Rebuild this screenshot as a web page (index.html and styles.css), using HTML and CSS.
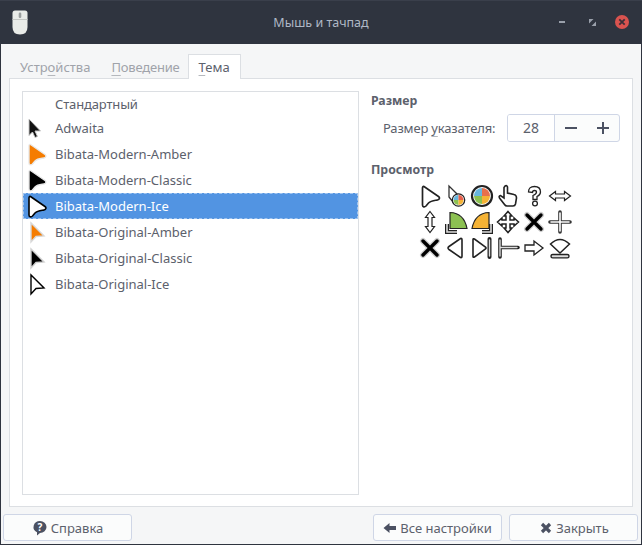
FILE: index.html
```html
<!DOCTYPE html>
<html lang="ru">
<head>
<meta charset="utf-8">
<title>Мышь и тачпад</title>
<link rel="stylesheet" href="styles.css">
</head>
<body>
<svg class="defs" width="0" height="0" aria-hidden="true">
  <defs>
    <path id="modern" d="M3 1.5 C2 1 1.5 2 1.5 3 L1.5 20 C1.5 22 3.5 22.5 5 21 L7.5 18 C10 15.5 14 15.5 16.5 15 C18.8 14.5 19 12.5 17.5 11.5 Z"/>
    <path id="orig" d="M2 1 L2 20 L7 14.5 L15 14 Z"/>
  </defs>
</svg>
<div class="window">
  <header class="titlebar">
    <svg class="app-icon" width="16" height="25" viewBox="0 0 16 25">
      <path d="M3 0.5 H13 Q15.5 0.5 15.5 3 V17 Q15.5 24.5 8 24.5 Q0.5 24.5 0.5 17 V3 Q0.5 0.5 3 0.5 Z" fill="#e9ebe8"/>
      <path d="M0.5 9.5 H15.5" stroke="#c4c7c4" stroke-width="1"/>
      <rect x="6.7" y="2.5" width="2.6" height="5.5" rx="1.2" fill="#9a9e9e"/>
    </svg>
    <div class="title">Мышь и тачпад</div>
    <div class="wm">
      <span class="wm-min"></span>
      <svg class="wm-max" width="7" height="7" viewBox="0 0 7 7"><path d="M0 0 H4.5 L0 4.5 Z M7 7 H2.5 L7 2.5 Z" fill="#9aa0ab"/></svg>
      <svg class="wm-close" width="16" height="16" viewBox="0 0 16 16"><circle cx="8" cy="8" r="7" fill="#d9534f"/><path d="M5.3 5.3 L10.7 10.7 M10.7 5.3 L5.3 10.7" stroke="#3a2f38" stroke-width="1.8"/></svg>
    </div>
  </header>

  <main class="content">
    <nav class="tabs">
      <span class="tab">Устр<u>о</u>йства</span>
      <span class="tab"><u>П</u>оведение</span>
      <span class="tab active"><u>Т</u>ема</span>
    </nav>
    <section class="pane">
      <div class="list">
        <div class="row first"><span class="row-icon"></span>Стандартный</div>
        <div class="row short">
          <span class="row-icon"><svg width="24" height="24" viewBox="0 0 24 24"><path d="M4 3 V19.5 L7.5 16 L10 21.5 L12.5 20.5 L10 15 H15.5 Z" fill="#111" stroke="#c8c8c8" stroke-width="1"/></svg></span>Adwaita
        </div>
        <div class="row">
          <span class="row-icon"><svg width="24" height="24" viewBox="0 0 24 24"><use href="#modern" transform="translate(2.5 1)" fill="#f57c00" stroke="#e8e8e8" stroke-width="1.4"/></svg></span>Bibata-Modern-Amber
        </div>
        <div class="row">
          <span class="row-icon"><svg width="24" height="24" viewBox="0 0 24 24"><use href="#modern" transform="translate(2.5 1)" fill="#000" stroke="#e8e8e8" stroke-width="1.4"/></svg></span>Bibata-Modern-Classic
        </div>
        <div class="row selected">
          <span class="row-icon"><svg width="24" height="24" viewBox="0 0 24 24"><use href="#modern" transform="translate(2.5 1)" fill="#fff" stroke="#000" stroke-width="1.6"/></svg></span>Bibata-Modern-Ice
        </div>
        <div class="row">
          <span class="row-icon"><svg width="24" height="24" viewBox="0 0 24 24"><use href="#orig" transform="translate(4 2)" fill="#f57c00" stroke="#d8d8d8" stroke-width="1.4"/></svg></span>Bibata-Original-Amber
        </div>
        <div class="row">
          <span class="row-icon"><svg width="24" height="24" viewBox="0 0 24 24"><use href="#orig" transform="translate(4 2)" fill="#000" stroke="#d0d0d0" stroke-width="1.4"/></svg></span>Bibata-Original-Classic
        </div>
        <div class="row">
          <span class="row-icon"><svg width="24" height="24" viewBox="0 0 24 24"><use href="#orig" transform="translate(4 2)" fill="#fff" stroke="#000" stroke-width="1.4"/></svg></span>Bibata-Original-Ice
        </div>
      </div>

      <aside class="side">
        <h2 class="heading">Размер</h2>
        <div class="size-row">
          <label class="size-label">Размер <u>у</u>казателя:</label>
          <div class="spin">
            <span class="spin-value">28</span>
            <span class="spin-btn"><svg width="12" height="12" viewBox="0 0 12 12"><path d="M0 6 H12" stroke="#4b5162" stroke-width="2"/></svg></span>
            <span class="spin-btn"><svg width="12" height="12" viewBox="0 0 12 12"><path d="M0 6 H12 M6 0 V12" stroke="#4b5162" stroke-width="2"/></svg></span>
          </div>
        </div>
        <h2 class="heading preview-heading">Просмотр</h2>
        <div class="preview">
          <svg width="24" height="24" viewBox="0 0 24 24"><use href="#modern" transform="translate(3 1)" fill="#fff" stroke="#222" stroke-width="1.7"/></svg>
          <svg width="24" height="24" viewBox="0 0 24 24"><path d="M5 2 L5 13 L9 18 L13 10 Z" fill="#fff" stroke="#333" stroke-width="1.3"/><circle cx="14.5" cy="16" r="6.2" fill="#fff" stroke="#222" stroke-width="1.3"/><path d="M14.5 16 V11 A5 5 0 0 0 9.5 16 Z" fill="#67b6de"/><path d="M14.5 16 H9.5 A5 5 0 0 0 14.5 21 Z" fill="#8cc152"/><path d="M14.5 16 V21 A5 5 0 0 0 19.5 16 Z" fill="#f5b335"/><path d="M14.5 16 H19.5 A5 5 0 0 0 14.5 11 Z" fill="#e8604c"/></svg>
          <svg width="24" height="24" viewBox="0 0 24 24"><circle cx="12" cy="12" r="10" fill="#fff" stroke="#222" stroke-width="2.2"/><path d="M12 12 V4 A8 8 0 0 0 4 12 Z" fill="#67b6de"/><path d="M12 12 H4 A8 8 0 0 0 12 20 Z" fill="#8cc152"/><path d="M12 12 V20 A8 8 0 0 0 20 12 Z" fill="#f5b335"/><path d="M12 12 H20 A8 8 0 0 0 12 4 Z" fill="#e8704c"/></svg>
          <svg width="24" height="24" viewBox="0 0 24 24"><path d="M9 2 Q11 1 11.5 3 L11.5 9 L18 10.5 Q20.5 11 20.5 14 L19.5 20 Q19 22 17 22 L11 22 Q9.5 22 8.5 20.5 L3.5 14 Q2.5 12 4.5 11.5 L8 14 L8 3.5 Z" fill="#fff" stroke="#222" stroke-width="1.6"/></svg>
          <svg width="24" height="24" viewBox="0 0 24 24"><path d="M6.5 8 Q6.5 2.5 12.5 2.5 Q18.5 2.5 18.5 8 Q18.5 11 15 12.5 L15 15.5 L11 15.5 L11 11.5 Q14.5 10 14.5 8 Q14.5 6.5 12.5 6.5 Q10.5 6.5 10.5 8.5 Z" fill="#fff" stroke="#222" stroke-width="1.3"/><circle cx="13" cy="19.5" r="2.4" fill="#fff" stroke="#222" stroke-width="1.3"/></svg>
          <svg width="24" height="24" viewBox="0 0 24 24"><path d="M1.5 12 L7.5 7.5 V10 H16.5 V7.5 L22.5 12 L16.5 16.5 V14 H7.5 V16.5 Z" fill="#fff" stroke="#222" stroke-width="1.2"/></svg>

          <svg width="24" height="24" viewBox="0 0 24 24"><path d="M12 1.5 L16.5 7.5 H14 V16.5 H16.5 L12 22.5 L7.5 16.5 H10 V7.5 H7.5 Z" fill="#fff" stroke="#222" stroke-width="1.2"/></svg>
          <svg width="24" height="24" viewBox="0 0 24 24"><path d="M6 2.5 Q20 3 23 18.5 L6 18.5 Z" fill="#8cc152" stroke="#222" stroke-width="1.2"/><path d="M3 14 V22 H13" fill="none" stroke="#222" stroke-width="4"/><path d="M3 14 V22 H13" fill="none" stroke="#ddd" stroke-width="1.6"/></svg>
          <svg width="24" height="24" viewBox="0 0 24 24"><path d="M19 2.5 Q5 3 2 18.5 L19 18.5 Z" fill="#f5b335" stroke="#222" stroke-width="1.2"/><path d="M21 14 V22 H12" fill="none" stroke="#222" stroke-width="4"/><path d="M21 14 V22 H12" fill="none" stroke="#ddd" stroke-width="1.6"/></svg>
          <svg width="24" height="24" viewBox="0 0 24 24"><path d="M12 1.5 L16 6 H14 V10 H18 V8 L22.5 12 L18 16 V14 H14 V18 H16 L12 22.5 L8 18 H10 V14 H6 V16 L1.5 12 L6 8 V10 H10 V6 H8 Z" fill="#fff" stroke="#222" stroke-width="1.5"/></svg>
          <svg width="24" height="24" viewBox="0 0 24 24"><path d="M5 5 L19 19 M19 5 L5 19" stroke="#ccc" stroke-width="6" stroke-linecap="round"/><path d="M5 5 L19 19 M19 5 L5 19" stroke="#000" stroke-width="3.4" stroke-linecap="round"/></svg>
          <svg width="24" height="24" viewBox="0 0 24 24"><path d="M12 2 V22 M2 12 H22" stroke="#333" stroke-width="3.6" stroke-linecap="round"/><path d="M12 3 V21 M3 12 H21" stroke="#fff" stroke-width="1.6" stroke-linecap="round"/></svg>

          <svg width="24" height="24" viewBox="0 0 24 24"><path d="M5 5 L19 19 M19 5 L5 19" stroke="#ccc" stroke-width="6" stroke-linecap="round"/><path d="M5 5 L19 19 M19 5 L5 19" stroke="#000" stroke-width="3.4" stroke-linecap="round"/></svg>
          <svg width="24" height="24" viewBox="0 0 24 24"><path d="M16.5 2.5 Q18 2 18 4 V20 Q18 22 16.5 21.5 L5 13.5 Q3 12 5 10.5 Z" fill="#fff" stroke="#222" stroke-width="1.6"/></svg>
          <svg width="24" height="24" viewBox="0 0 24 24"><path d="M3 3.5 Q3 2.5 4.5 3 L15.5 11 Q16.5 12 15.5 13 L4.5 21 Q3 21.5 3 20.5 Z" fill="#fff" stroke="#222" stroke-width="1.6"/><path d="M19.5 3 V21" stroke="#222" stroke-width="4" stroke-linecap="round"/><path d="M19.5 4 V20" stroke="#ddd" stroke-width="1.4" stroke-linecap="round"/></svg>
          <svg width="24" height="24" viewBox="0 0 24 24"><path d="M4 3 V21 M4 11.5 H22" stroke="#222" stroke-width="3.6" stroke-linecap="round"/><path d="M4 4 V20 M4 11.5 H21" stroke="#ddd" stroke-width="1.4" stroke-linecap="round"/></svg>
          <svg width="24" height="24" viewBox="0 0 24 24"><path d="M3 9 H12 V5 L21 12 L12 19 V15 H3 Z" fill="#fff" stroke="#222" stroke-width="1.3"/></svg>
          <svg width="24" height="24" viewBox="0 0 24 24"><path d="M2.5 8 Q12 -1 21.5 8 L12 17 Z" fill="#fff" stroke="#222" stroke-width="1.5"/><rect x="3" y="18.5" width="18" height="3.4" rx="1.7" fill="#ddd" stroke="#222" stroke-width="1.4"/></svg>
        </div>
      </aside>
    </section>

    <footer class="actions">
      <button class="btn btn-help" type="button"><svg width="16" height="16" viewBox="0 0 16 16"><path d="M8 1 A6.5 6 0 0 1 8 13 L5 15.5 L5 12.3 A6.5 6 0 0 1 8 1 Z" fill="#4b5162"/><text x="8" y="10.5" class="q">?</text></svg>Справка</button>
      <div class="actions-right">
        <button class="btn" type="button"><svg width="14" height="12" viewBox="0 0 14 12"><path d="M0.5 6 L6.5 1 V4 H13 V8 H6.5 V11 Z" fill="#4b5162"/></svg>Все настройки</button>
        <button class="btn btn-close" type="button"><svg width="12" height="12" viewBox="0 0 12 12"><path d="M2 2 L10 10 M10 2 L2 10" stroke="#4b5162" stroke-width="3.2"/></svg>Закрыть</button>
      </div>
    </footer>
  </main>
</div>
</body>
</html>
```
FILE: styles.css
```css
* { box-sizing: border-box; }
html, body { margin: 0; padding: 0; }
body {
  width: 642px;
  height: 545px;
  overflow: hidden;
  font-family: "Noto Sans", sans-serif;
  font-size: 13px;
  color: #5c616c;
  background: #2f343f;
}
.defs { display: block; height: 0; }
.window { display: flex; flex-direction: column; width: 642px; height: 545px; }
.titlebar {
  position: relative;
  flex: none;
  height: 44px;
  display: flex;
  align-items: center;
  justify-content: center;
  background: #2f343f;
  border-top: 1px solid #3a3f4b;
}
.app-icon { position: absolute; left: 12px; top: 9px; }
.title { color: #afb8c6; font-size: 12.5px; }
.wm { position: absolute; right: 12px; top: 13px; display: flex; align-items: center; height: 16px; }
.wm-min { width: 6px; height: 2px; background: #9aa0ab; margin-right: 24px; }
.wm-max { margin-right: 18px; }
.content {
  flex: 1;
  display: flex;
  flex-direction: column;
  margin: 0 1px 1px 1px;
  background: #f5f6f7;
  min-height: 0;
}
.tabs { display: flex; height: 34px; padding: 10px 0 0 8px; flex: none; position: relative; }
.tab {
  height: 24px;
  line-height: 26px;
  padding: 0 10px 0 11px;
  color: #a0a3aa;
}
.tab:nth-child(2) { letter-spacing: -0.2px; padding-right: 8px; }
u {
  text-decoration-color: #b5b8bd;
  text-decoration-skip-ink: none;
  text-underline-offset: 3px;
}
.tab.active {
  position: relative;
  color: #5c616c;
  background: #fff;
  border: 1px solid #dcdfe3;
  border-bottom: 0;
  height: 25px;
  line-height: 25px;
  padding: 0 10px;
  z-index: 1;
}
.pane {
  flex: none;
  height: 429px;
  margin: 0 8px;
  background: #fff;
  border: 1px solid #dcdfe3;
  display: flex;
  padding: 12px;
}
.list {
  flex: none;
  width: 337px;
  height: 404px;
  border: 1px solid #dcdfe3;
  background: #fff;
}
.row {
  display: flex;
  align-items: center;
  height: 26px;
  color: #5c616c;
  white-space: nowrap;
}
.row.first { height: 24px; letter-spacing: -0.15px; }
.row.short { height: 25px; padding-bottom: 1px; }
.row.selected {
  background: #5294e2;
  color: #fff;
  outline: 1px dashed rgba(255,255,255,0.45);
  outline-offset: -1px;
}
.row-icon { flex: none; width: 32px; height: 24px; display: block; }
.row-icon svg { display: block; margin-left: 2px; }
.side { flex: 1; padding-left: 12px; min-width: 0; }
.heading { margin: 0; font-size: 12.3px; font-weight: 700; color: #5c616c; line-height: 20px; }
.size-row { display: flex; align-items: center; margin-top: 3px; padding-left: 12px; }
.size-label { flex: none; width: 124px; letter-spacing: -0.17px; }
.spin {
  display: flex;
  height: 28px;
  width: 113px;
  border: 1px solid #cfd6e6;
  border-radius: 3px;
  overflow: hidden;
  background: #fbfcfc;
}
.spin-value {
  width: 47px;
  flex: none;
  text-align: center;
  line-height: 26px;
  background: #fff;
  border-right: 1px solid #cfd6e6;
  font-size: 14px;
}
.spin-btn { flex: 1; display: flex; align-items: center; justify-content: center; }
.spin-btn svg { display: block; }
.preview-heading { margin-top: 18px; }
.preview {
  display: grid;
  grid-template-columns: repeat(6, 24px);
  grid-auto-rows: 24px;
  gap: 2px;
  margin: 4px 0 0 47px;
}
.preview svg { display: block; }
.actions {
  flex: none;
  display: flex;
  justify-content: space-between;
  padding: 7px 3px 0 2px;
}
.actions-right { display: flex; gap: 7px; }
.btn {
  width: 129px;
  height: 27px;
  border: 1px solid #cfd6e6;
  border-radius: 3px;
  background: #fbfcfc;
  font: inherit;
  color: #5c616c;
  display: flex;
  align-items: center;
  justify-content: center;
  gap: 3px;
  padding: 0;
}
.btn svg { flex: none; }
.btn-close { padding-left: 2px; gap: 4px; }
.q { font-size: 10px; font-weight: 700; fill: #fff; text-anchor: middle; }
```
